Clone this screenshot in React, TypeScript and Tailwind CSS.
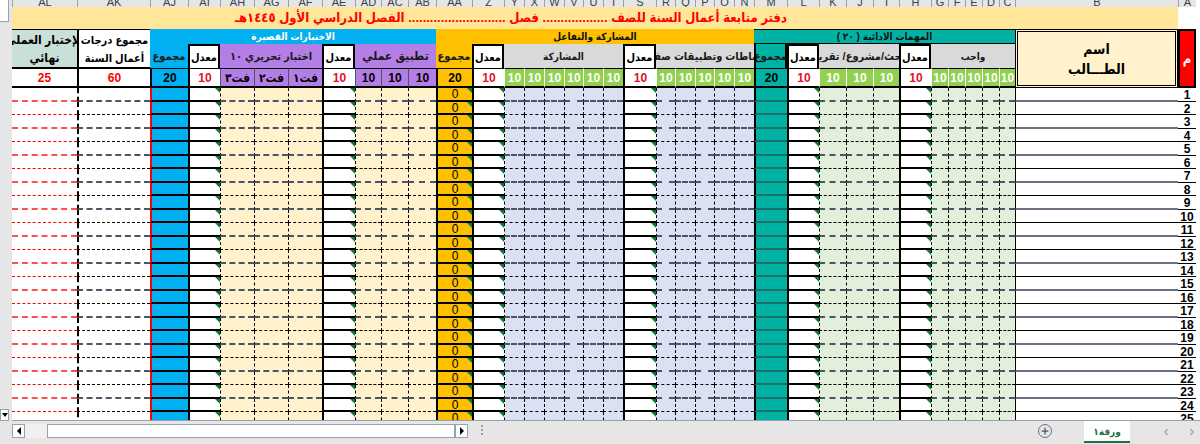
import { Plus, ChevronLeft, ChevronRight } from "lucide-react";

type Kind = "num" | "name" | "green" | "blue" | "cream" | "avg" | "teal" | "orange" | "sky" | "total" | "final";

const sheetFont = "font-['Liberation_Sans','DejaVu_Sans_Condensed','DejaVu_Sans',sans-serif]";

// Excel sheet is right-to-left, so the columns start at A
const columns: { letter: string; kind: Kind }[] = [
  { letter: "A", kind: "num" },
  { letter: "B", kind: "name" },
  ...["C", "D", "E", "F", "G"].map((letter) => ({ letter, kind: "green" as Kind })),
  { letter: "H", kind: "avg" },
  ...["I", "J", "K"].map((letter) => ({ letter, kind: "green" as Kind })),
  { letter: "L", kind: "avg" },
  { letter: "M", kind: "teal" },
  ...["N", "O", "P", "Q", "R"].map((letter) => ({ letter, kind: "blue" as Kind })),
  { letter: "S", kind: "avg" },
  ...["T", "U", "V", "W", "X", "Y"].map((letter) => ({ letter, kind: "blue" as Kind })),
  { letter: "Z", kind: "avg" },
  { letter: "AA", kind: "orange" },
  ...["AB", "AC", "AD"].map((letter) => ({ letter, kind: "cream" as Kind })),
  { letter: "AE", kind: "avg" },
  ...["AF", "AG", "AH"].map((letter) => ({ letter, kind: "cream" as Kind })),
  { letter: "AI", kind: "avg" },
  { letter: "AJ", kind: "sky" },
  { letter: "AK", kind: "total" },
  { letter: "AL", kind: "final" },
];

const purpleLabels: Record<string, string> = { AF: "فت١", AG: "فت٢", AH: "فت٣" };

function valueCell(letter: string, kind: Kind) {
  const base = "flex items-center justify-center border-b-2 border-t border-black text-[12px] font-bold";
  if (kind === "num" || kind === "name") return null;
  if (kind === "final") return <div key={letter} className={`${base} bg-white text-[#ff0000]`}>25</div>;
  if (kind === "total") return <div key={letter} className={`${base} border-l-2 bg-white text-[#ff0000]`}>60</div>;
  if (kind === "sky") return <div key={letter} className={`${base} border-l-2 bg-[#00b0f0] text-black`}>20</div>;
  if (kind === "orange") return <div key={letter} className={`${base} border-l-2 bg-[#ffc000] text-black`}>20</div>;
  if (kind === "teal") return <div key={letter} className={`${base} border-l-2 bg-[#00b2a4] text-black`}>20</div>;
  if (kind === "avg") return <div key={letter} className={`${base} border-l-2 bg-white text-[#e0112b]`}>10</div>;
  if (kind === "cream") {
    const label = purpleLabels[letter];
    return (
      <div key={letter} className={`${base} border-l border-l-gray-600 bg-[#b37fe6] text-black ${label ? "text-[10px]" : ""}`}>
        {label ?? "10"}
      </div>
    );
  }
  return <div key={letter} className={`${base} border-l border-l-white bg-[#92d050] text-white`}>10</div>;
}

function bodyCell(letter: string, kind: Kind, row: number) {
  const odd = row % 2 === 1;
  const h = odd ? "h-[14px]" : "h-[13px]";
  const key = `${letter}-${row}`;
  const corner = (
    <span className="absolute right-0 top-0 h-0 w-0 border-l-[5px] border-t-[5px] border-l-transparent border-t-[#0b7a33]" />
  );
  const dashed = odd ? "border-b-2 border-dashed border-b-gray-600" : "border-b border-dashed border-b-black";
  if (kind === "num")
    return (
      <div key={key} className={`${h} flex items-center justify-center border-b border-b-black bg-white pt-[1px] text-[12px] font-bold leading-none text-black`}>
        {row}
      </div>
    );
  if (kind === "name")
    return <div key={key} className={`${h} border-l border-l-black bg-white ${odd ? "border-b-2 border-b-gray-500" : "border-b border-b-black"}`} />;
  if (kind === "final")
    return <div key={key} className={`${h} bg-white ${odd ? "border-b-2 border-dashed border-b-[#ff5050]" : "border-b border-dashed border-b-[#ff0000]"}`} />;
  if (kind === "total") return <div key={key} className={`${h} border-l-2 border-l-black bg-white ${dashed}`} />;
  if (kind === "sky") return <div key={key} className={`${h} border-b-2 border-l-2 border-b-black border-l-[#ff0000] bg-[#00b0f0]`} />;
  if (kind === "teal") return <div key={key} className={`${h} border-b-2 border-l-2 border-b-[#1d6f68] border-l-black bg-[#00b2a4]`} />;
  if (kind === "orange")
    return (
      <div key={key} className={`${h} relative flex items-center justify-center border-b-2 border-l-2 border-b-black border-l-black bg-[#ffc000] text-[12px] leading-none text-black`}>
        0
        {corner}
      </div>
    );
  if (kind === "avg")
    return (
      <div key={key} className={`${h} relative border-b-2 border-l-2 border-b-black border-l-black bg-white`}>
        {corner}
      </div>
    );
  const fill = kind === "green" ? "bg-[#e2efda]" : kind === "blue" ? "bg-[#d9e1f2]" : "bg-[#fff2cc]";
  return <div key={key} className={`${h} border-l border-dashed border-l-black ${fill} ${dashed}`} />;
}

function AvgHeader() {
  return (
    <div className="flex items-center justify-center overflow-hidden whitespace-nowrap border-2 border-b-0 border-black bg-white text-[11px] font-bold">
      معدل
    </div>
  );
}

function SubHeader({ span, fill, children, size }: { span: string; fill: string; children: string; size: string }) {
  return (
    <div className={`${span} ${fill} ${size} flex items-center justify-center overflow-hidden whitespace-nowrap font-bold text-[#1a1a1a]`}>
      {children}
    </div>
  );
}

export default function App() {
  const rows = Array.from({ length: 25 }, (_, i) => i + 1);

  return (
    <div dir="ltr" className={`flex h-[444px] w-[1200px] flex-col overflow-hidden bg-[#e6e6e6] ${sheetFont}`}>
      <div className="flex h-[421px]">
        {/* vertical scrollbar */}
        <div className="flex w-[12px] shrink-0 flex-col bg-[#e6e6e6]">
          <div className="h-[22px] w-[9px] border-b border-r border-gray-400 bg-white" />
          <div className="flex-1" />
          <div className="flex h-[12px] w-[9px] items-center justify-center border border-gray-400 bg-white">
            <span className="h-0 w-0 border-x-[3px] border-t-[4px] border-x-transparent border-t-black" />
          </div>
        </div>

        <div
          dir="rtl"
          className="grid h-[421px] grid-cols-[18px_163px_16px_17px_17px_17px_17px_32px_26px_27px_27px_32px_33px_20px_20px_19px_20px_19px_33px_20px_20px_19px_20px_20px_20px_32px_36px_28px_27px_26px_33px_34px_34px_34px_32px_38px_73px_65px] grid-rows-[7px_22px_15px_24px_20px] content-start overflow-hidden border-b border-gray-400 bg-white pr-[4px] [width:1188px]"
        >
          {/* column letters, cut off by the top of the picture */}
          {columns.map((c) => (
            <div key={c.letter} className="flex items-end justify-center overflow-hidden border-l border-gray-400 bg-[#e6e6e6] text-[11px] leading-[9px] text-gray-700">
              {c.letter}
            </div>
          ))}

          {/* title row */}
          <div className="bg-white" />
          <div className="col-span-11 bg-[#ffe699]" />
          <div className="col-span-26 flex items-center whitespace-nowrap bg-[#ffe699] text-[13px] font-bold text-[#ff0000]">
            دفتر متابعة أعمال السنة للصف .................. فصل ........................... الفصل الدراسي الأول ١٤٤٥هـ
          </div>

          {/* A / B header */}
          <div className="row-span-3 flex items-center justify-center border-2 border-black bg-[#ff0000] text-[13px] font-bold text-white">م</div>
          <div className="row-span-3 flex flex-col items-center justify-center border-[3px] border-double border-black bg-[#fff2cc] text-[14px] font-bold leading-[20px] text-black">
            <span>اسم</span>
            <span>الطـــالب</span>
          </div>

          {/* group headers */}
          <div className="col-span-11 flex items-center justify-center border-y border-black bg-[#00b2a4] text-[10px] font-bold text-[#111]">المهمات الادائية ( ٢٠ )</div>
          <div className="col-span-14 flex items-center justify-center bg-[#ffc000] text-[10px] font-bold text-[#111]">المشاركة والتفاعل</div>
          <div className="col-span-9 flex items-center justify-center bg-[#00b0f0] text-[10px] font-bold text-white">الاختبارات القصيرة</div>
          <div className="row-span-2 flex flex-col items-center justify-center overflow-hidden whitespace-nowrap border-y border-l-2 border-black bg-white text-[11px] font-bold leading-[18px] text-black [grid-column:37]">
            <span>مجموع درجات</span>
            <span>أعمال السنة</span>
          </div>
          <div className="row-span-2 flex flex-col items-center justify-center overflow-hidden whitespace-nowrap border-y border-black bg-[#c9e0d8] text-[12px] font-bold leading-[18px] text-black">
            <span>الإختبار العملي</span>
            <span>نهائي</span>
          </div>

          {/* sub headers */}
          <SubHeader span="col-span-5" fill="bg-[#d9d9d9]" size="text-[10px]">واجب</SubHeader>
          <AvgHeader />
          <SubHeader span="col-span-3" fill="bg-[#d9d9d9]" size="text-[11px]">بحث/مشروع/ تقرير</SubHeader>
          <AvgHeader />
          <SubHeader span="" fill="bg-[#00b2a4] border-x-2 border-black" size="text-[11px]">مجموع</SubHeader>
          <SubHeader span="col-span-5" fill="bg-[#d9d9d9]" size="text-[11px]">نشاطات وتطبيقات صفية</SubHeader>
          <AvgHeader />
          <SubHeader span="col-span-6" fill="bg-[#d9d9d9]" size="text-[10px]">المشاركة</SubHeader>
          <AvgHeader />
          <SubHeader span="" fill="bg-[#ffc000]" size="text-[11px]">مجموع</SubHeader>
          <SubHeader span="col-span-3" fill="bg-[#b37fe6]" size="text-[12px]">تطبيق عملي</SubHeader>
          <AvgHeader />
          <SubHeader span="col-span-3" fill="bg-[#b37fe6]" size="text-[11px]">اختبار تحريري ١٠</SubHeader>
          <AvgHeader />
          <SubHeader span="" fill="bg-[#00b0f0]" size="text-[11px]">مجموع</SubHeader>

          {/* max marks */}
          {columns.map((c) => valueCell(c.letter, c.kind))}

          {/* student rows */}
          {rows.flatMap((row) => columns.map((c) => bodyCell(c.letter, c.kind, row)))}
        </div>
      </div>

      {/* bottom bar with sheet tab and scrollbar */}
      <div className="flex h-[23px] items-start bg-[#e6e6e6]">
        <div className="ml-[12px] mt-[3px] flex h-[14px] w-[456px] shrink-0 items-stretch">
          <div className="flex w-[13px] items-center justify-center border border-gray-400 bg-white">
            <span className="h-0 w-0 border-y-[4px] border-r-[4px] border-y-transparent border-r-black" />
          </div>
          <div className="w-[22px] bg-[#f0f0f0]" />
          <div className="flex-1 border border-gray-400 bg-white" />
          <div className="flex w-[13px] items-center justify-center border border-gray-400 bg-white">
            <span className="h-0 w-0 border-y-[4px] border-l-[4px] border-y-transparent border-l-black" />
          </div>
        </div>
        <div className="ml-[13px] mt-[4px] flex w-[3px] flex-col gap-[2px]">
          <span className="h-[2px] w-[2px] bg-gray-400" />
          <span className="h-[2px] w-[2px] bg-gray-400" />
          <span className="h-[2px] w-[2px] bg-gray-400" />
        </div>
        <div className="ml-[554px] mt-[3px] flex h-[14px] w-[14px] items-center justify-center rounded-full border border-gray-500">
          <Plus className="h-[10px] w-[10px] text-gray-600" strokeWidth={3} />
        </div>
        <div className="ml-[32px] flex h-[22px] w-[46px] items-center justify-center border-b-2 border-[#1e7145] bg-white text-[10px] font-bold text-[#1e7145]" dir="rtl">
          ورقة١
        </div>
        <ChevronLeft className="ml-[31px] mt-[6px] h-[10px] w-[10px] text-gray-400" strokeWidth={3} />
        <ChevronRight className="ml-[16px] mt-[6px] h-[10px] w-[10px] text-gray-400" strokeWidth={3} />
      </div>
    </div>
  );
}
